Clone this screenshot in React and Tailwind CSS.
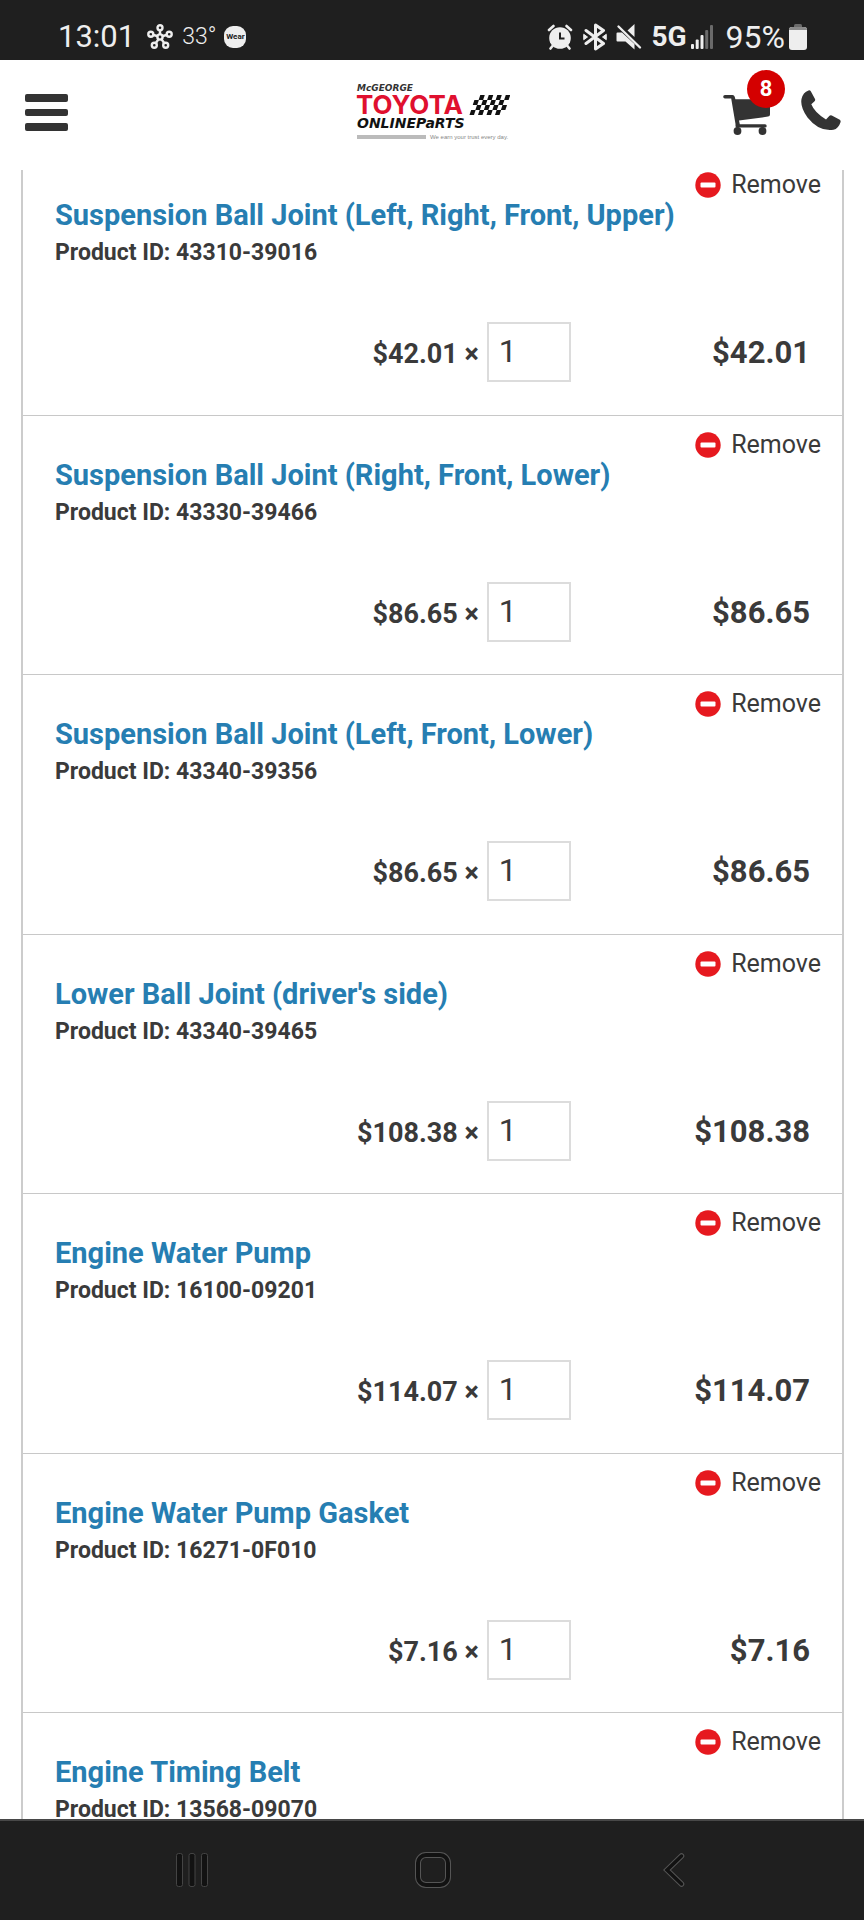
import { useState } from 'react';

const ITEMS = [
  { id: '43310-39016', name: 'Suspension Ball Joint (Left, Right, Front, Upper)', price: 42.01 },
  { id: '43330-39466', name: 'Suspension Ball Joint (Right, Front, Lower)', price: 86.65 },
  { id: '43340-39356', name: 'Suspension Ball Joint (Left, Front, Lower)', price: 86.65 },
  { id: '43340-39465', name: "Lower Ball Joint (driver's side)", price: 108.38 },
  { id: '16100-09201', name: 'Engine Water Pump', price: 114.07 },
  { id: '16271-0F010', name: 'Engine Water Pump Gasket', price: 7.16 },
  { id: '13568-09070', name: 'Engine Timing Belt', price: 31.85 },
];

const formatPrice = (value) => `$${value.toFixed(2)}`;

function HubIcon() {
  return (
    <svg viewBox="0 0 26 26" className="w-[26px] h-[26px]" fill="none" stroke="#eeeeee" strokeWidth="2.400">
      <path d="M13 10V6M10.200 12L6.500 11M15.800 12L19.500 11M11.400 15.400L9 18.800M14.600 15.400L17 18.800" />
      <circle cx="13" cy="13" r="2.600" />
      <circle cx="13" cy="3.700" r="2.500" />
      <circle cx="3.800" cy="10.200" r="2.500" />
      <circle cx="22.200" cy="10.200" r="2.500" />
      <circle cx="7.300" cy="21.300" r="2.500" />
      <circle cx="18.700" cy="21.300" r="2.500" />
    </svg>
  );
}

function WearIcon() {
  return (
    <span className="flex items-center justify-center w-[22px] h-[22px] rounded-[9px] bg-[#eeeeee] text-[8px] font-bold text-[#222]">
      Wear
    </span>
  );
}

function AlarmIcon() {
  return (
    <svg viewBox="0 0 26 26" className="w-[26px] h-[26px]" fill="none" stroke="#eeeeee" strokeWidth="2.600" strokeLinecap="round">
      <circle cx="13" cy="14" r="10.800" fill="#eeeeee" stroke="none" />
      <path d="M2 6L6.500 2M24 6L19.500 2M5.500 22L3.500 24.500M20.500 22L22.500 24.500" />
      <path d="M13 8.500V14.500H17.500" stroke="#1f1f1f" strokeWidth="2" strokeLinecap="butt" />
    </svg>
  );
}

function BluetoothIcon() {
  return (
    <svg viewBox="0 0 24 28" className="w-[24px] h-[28px]" fill="none" stroke="#eeeeee" strokeWidth="3" strokeLinejoin="round" strokeLinecap="round">
      <path d="M3 7.500L20.500 20.500L12.500 26V2L20.500 7.500L3 20.500" />
      <path d="M1 11.500L4.500 14L1 16.500zM23 11.500L19.500 14L23 16.500z" fill="#eeeeee" strokeWidth="1" />
    </svg>
  );
}

function MuteIcon() {
  return (
    <svg viewBox="0 0 26 28" className="w-[26px] h-[28px]">
      <path d="M1.500 9.500H6L18.500 21V26.500L9.500 18.500H1.500Q0.500 18.500 0.500 17.500V10.500Q0.500 9.500 1.500 9.500z" fill="#eeeeee" />
      <path d="M11.500 7.500L18.500 1V14z" fill="#eeeeee" />
      <path d="M2.500 3.500L24 24.500" stroke="#eeeeee" strokeWidth="2.400" strokeLinecap="round" />
    </svg>
  );
}

function SignalIcon() {
  return (
    <svg viewBox="0 0 22 24" className="w-[22px] h-[24px]">
      <rect x="0" y="19" width="3" height="5" rx="1" fill="#eeeeee" />
      <rect x="4.700" y="14.500" width="3" height="9.500" rx="1" fill="#eeeeee" />
      <rect x="9.500" y="10" width="3" height="14" rx="1" fill="#eeeeee" />
      <rect x="14.200" y="5" width="3" height="19" rx="1" fill="#6a6a6a" />
      <rect x="19" y="0" width="3" height="24" rx="1" fill="#6a6a6a" />
    </svg>
  );
}

function BatteryIcon() {
  return (
    <svg viewBox="0 0 18 26" className="w-[18px] h-[26px]">
      <rect x="5" y="0" width="8" height="5" rx="1.500" fill="#6a6a6a" />
      <rect x="0" y="3" width="18" height="23" rx="3" fill="#eeeeee" />
      <path d="M0 6Q0 3 3 3H15Q18 3 18 6z" fill="#8a8a8a" />
    </svg>
  );
}

function StatusBar() {
  return (
    <div className="flex items-center justify-between shrink-0 h-[60px] pt-[14px] pl-[58px] pr-[57px] bg-[#1f1f1f] text-[#eeeeee]">
      <div className="flex items-center">
        <span className="text-[31px] leading-[44px]">13:01</span>
        <span className="ml-3"><HubIcon /></span>
        <span className="ml-[9px] text-[23px] leading-[44px] font-light">33°</span>
        <span className="ml-2"><WearIcon /></span>
      </div>
      <div className="flex items-center">
        <AlarmIcon />
        <span className="ml-[10px]"><BluetoothIcon /></span>
        <span className="ml-[9px]"><MuteIcon /></span>
        <span className="ml-[9px] text-[28px] leading-[44px] font-bold">5G</span>
        <span className="ml-1"><SignalIcon /></span>
        <span className="ml-[13px] text-[32px] leading-[44px]">95%</span>
        <span className="ml-1"><BatteryIcon /></span>
      </div>
    </div>
  );
}

function Logo() {
  return (
    <svg viewBox="-1 0 154 58" className="w-[154px] h-[58px]">
      <text x="0" y="7" fontFamily="DejaVu Sans, sans-serif" fontWeight="700" fontStyle="italic" fontSize="9" fill="#333">McGEORGE</text>
      <text x="-1" y="30" fontFamily="Inter, sans-serif" fontWeight="700" fontSize="26" fill="#e0102f">TOYOTA</text>
      <text x="0" y="44" fontFamily="DejaVu Sans, sans-serif" fontWeight="700" fontStyle="italic" fontSize="14" fill="#111">ONLINEPaRTS</text>
      <g fill="#111" transform="translate(119 11) skewX(-18)">
        {[0, 1, 2, 3].map((row) =>
          [0, 1, 2, 3].map((col) => (
            <rect key={`${row}-${col}`} x={col * 8.5 + (row % 2 ? 0 : 4.25)} y={row * 5} width="4.500" height="5" />
          ))
        )}
      </g>
      <rect x="0" y="51" width="69" height="4" fill="#bbb" />
      <text x="73" y="55" fontFamily="Liberation Sans, sans-serif" fontSize="6" fill="#888">We earn your trust every day.</text>
    </svg>
  );
}

function Header({ count }) {
  return (
    <header className="relative z-10 grid grid-cols-[1fr_auto_1fr] items-center shrink-0 h-[110px] pb-[9px] pl-[25px] pr-[23px] bg-white">
      <button type="button" aria-label="Menu" className="flex flex-col gap-[7px] w-[43px] pt-1">
        <span className="w-full h-2 rounded-[2px] bg-[#333]" />
        <span className="w-full h-[7px] rounded-[2px] bg-[#333]" />
        <span className="w-full h-2 rounded-[2px] bg-[#333]" />
      </button>
      <a href="#home" aria-label="McGeorge Toyota Online Parts" className="pt-1"><Logo /></a>
      <div className="flex items-center justify-end gap-[30px]">
        <a href="#cart" aria-label="Cart" className="relative mt-2">
          <svg viewBox="0 0 48 42" className="w-[48px] h-[42px]" fill="#333">
            <path d="M2 1H9.500Q11.300 1 11.700 2.800L12.400 5.200H47V20.500Q47 22.300 45 22.600L16 26.500L16.800 30.200H42Q43.700 30.200 43.700 31.900T42 33.600H14Q12.500 33.600 12.500 32V30L8.200 4.600H2Q0.200 4.600 0.200 2.800T2 1z" />
            <circle cx="14.500" cy="37" r="3.900" />
            <circle cx="39.500" cy="37" r="3.900" />
            <rect x="13.500" y="32" width="2" height="4" />
            <rect x="38.500" y="32" width="2" height="4" />
          </svg>
          <span className="absolute left-6 -top-6 flex items-center justify-center w-[38px] h-[38px] rounded-full bg-[#d40000] text-white text-[22px] font-bold">
            {count}
          </span>
        </a>
        <a href="#call" aria-label="Call us">
          <svg viewBox="0 0 40 41" className="w-[40px] h-[41px]" fill="#333">
            <path d="M0.500 9Q2 2 7.500 0.400Q9 0 9.800 1.300L14 9Q14.600 10.500 13.300 11.500L10.300 14.300Q13.500 22.500 25 29.500L28.500 25.700Q29.500 24.800 30.800 25.500L38.800 29.800Q40 30.800 39.500 32.200Q37.500 38.500 32.500 39.800Q18 42 6.500 27.500Q-1 17 0.500 9z" />
          </svg>
        </a>
      </div>
    </header>
  );
}

function CartItem({ item }) {
  const [quantity, setQuantity] = useState('1');
  const total = item.price * (Number(quantity) || 0);

  return (
    <li className="odd:h-[260px] even:h-[259px] shrink-0 border-b border-[#c8c8c8] pl-8 pr-[21px] pt-[14px]">
      <div className="flex justify-end">
        <button type="button" className="flex items-center gap-[10px] text-[25px] leading-[30px]">
          <svg viewBox="0 0 26 26" className="w-[26px] h-[26px]">
            <circle cx="13" cy="13" r="12.700" fill="#e6191f" />
            <rect x="5.500" y="10.500" width="15" height="5" rx="1" fill="#fff" />
          </svg>
          Remove
        </button>
      </div>
      <h2 className="text-[29px] leading-[30px] font-bold text-[#267eb2]">
        <a href={`#${item.id}`}>{item.name}</a>
      </h2>
      <p className="mt-[7px] text-[23px] leading-[32px] font-bold">Product ID: {item.id}</p>
      <div className="grid grid-cols-[11fr_84px_6fr] items-center gap-2 mt-[53px] pr-[11px]">
        <label htmlFor={`qty-${item.id}`} className="pt-1 text-right text-[27px] font-bold">
          {formatPrice(item.price)} ×
        </label>
        <input
          id={`qty-${item.id}`}
          type="text"
          inputMode="numeric"
          value={quantity}
          onChange={(e) => setQuantity(e.target.value)}
          className="w-[84px] h-[60px] px-[10px] pb-[2px] border-2 border-[#dcdcdc] text-[32px]"
        />
        <span className="pt-[2px] text-right text-[31px] font-bold">{formatPrice(total)}</span>
      </div>
    </li>
  );
}

function NavBar() {
  return (
    <nav className="relative z-10 grid grid-cols-3 items-center shrink-0 h-[101px] pb-[2px] pl-[71px] pr-[70px] border-t-2 border-[#484848] bg-[#1f1f1f]">
      <button type="button" aria-label="Recent apps" className="justify-self-center">
        <svg viewBox="0 0 34 36" className="w-[34px] h-[36px]" fill="#121212" stroke="#444" strokeWidth="1">
          <rect x="1.500" y="1.500" width="6" height="33" rx="2" />
          <rect x="14" y="1.500" width="6" height="33" rx="2" />
          <rect x="26.500" y="1.500" width="6" height="33" rx="2" />
        </svg>
      </button>
      <button type="button" aria-label="Home" className="justify-self-center">
        <svg viewBox="0 0 36 36" className="w-[36px] h-[36px]" fill="none">
          <rect x="3" y="3" width="30" height="30" rx="8" stroke="#555" strokeWidth="6" />
          <rect x="3" y="3" width="30" height="30" rx="8" stroke="#121212" strokeWidth="4" />
        </svg>
      </button>
      <button type="button" aria-label="Back" className="justify-self-center">
        <svg viewBox="0 0 24 36" className="w-[24px] h-[36px]" fill="none" strokeLinecap="round">
          <path d="M19.500 4L5 18L19.500 32" stroke="#555" strokeWidth="5.500" />
          <path d="M19.500 4L5 18L19.500 32" stroke="#121212" strokeWidth="3.500" />
        </svg>
      </button>
    </nav>
  );
}

export default function App() {
  return (
    <div className="flex flex-col h-screen bg-white text-[#3a3a3a] font-[Roboto,sans-serif]">
      <StatusBar />
      <Header count={8} />
      <main className="flex-1 min-h-0 overflow-hidden px-5">
        {/* list is scrolled slightly under the header */}
        <ul className="flex flex-col -mt-[14px] ml-px border-x-2 border-[#cccccc]">
          {ITEMS.map((item) => (
            <CartItem key={item.id} item={item} />
          ))}
        </ul>
      </main>
      <NavBar />
    </div>
  );
}
